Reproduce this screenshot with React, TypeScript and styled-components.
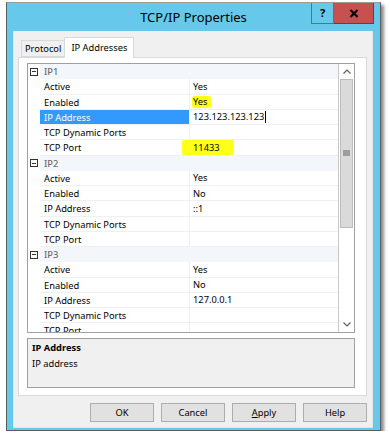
import React from 'react'
import styled, { createGlobalStyle } from 'styled-components'

const GlobalStyle = createGlobalStyle`
  html, body {
    margin: 0;
    padding: 0;
    background: #ffffff;
  }
  body {
    font-family: 'Noto Sans', 'Liberation Sans', sans-serif;
    font-size: 9.3px;
    color: #000000;
  }
`

type Prop = {
  name: string
  value: string
  highlight?: 'yes' | 'port'
  selected?: boolean
}

type Group = {
  name: string
  rows: Prop[]
}

const groups: Group[] = [
  {
    name: 'IP1',
    rows: [
      { name: 'Active', value: 'Yes' },
      { name: 'Enabled', value: 'Yes', highlight: 'yes' },
      { name: 'IP Address', value: '123.123.123.123', selected: true },
      { name: 'TCP Dynamic Ports', value: '' },
      { name: 'TCP Port', value: '11433', highlight: 'port' },
    ],
  },
  {
    name: 'IP2',
    rows: [
      { name: 'Active', value: 'Yes' },
      { name: 'Enabled', value: 'No' },
      { name: 'IP Address', value: '::1' },
      { name: 'TCP Dynamic Ports', value: '' },
      { name: 'TCP Port', value: '' },
    ],
  },
  {
    name: 'IP3',
    rows: [
      { name: 'Active', value: 'Yes' },
      { name: 'Enabled', value: 'No' },
      { name: 'IP Address', value: '127.0.0.1' },
      { name: 'TCP Dynamic Ports', value: '' },
      { name: 'TCP Port', value: '' },
    ],
  },
]

const App = () => {
  return (
    <>
      <GlobalStyle />
      <Window>
        <TitleBar>
          <span />
          <Title>TCP/IP Properties</Title>
          <CaptionButtons>
            <HelpCaption>?</HelpCaption>
            <CloseCaption>
              <svg width="10" height="9" viewBox="0 0 10 9">
                <path d="M1.5 1 L8.5 8 M8.5 1 L1.5 8" stroke="#000" strokeWidth="2.2" />
              </svg>
            </CloseCaption>
          </CaptionButtons>
        </TitleBar>
        <Client>
          <TabStrip>
            <Tab>Protocol</Tab>
            <Tab active>IP Addresses</Tab>
          </TabStrip>
          <TabPanel>
            <PropertyGrid>
              <GridRows>
                {groups.map(group => (
                  <React.Fragment key={group.name}>
                    <Row>
                      <Margin>
                        <Expander />
                      </Margin>
                      <CategoryCell>{group.name}</CategoryCell>
                    </Row>
                    {group.rows.map(row => (
                      <Row key={group.name + row.name}>
                        <Margin />
                        <NameCell selected={row.selected}>{row.name}</NameCell>
                        <ValueCell>
                          {row.highlight ? (
                            <Highlight kind={row.highlight}>{row.value}</Highlight>
                          ) : (
                            row.value
                          )}
                          {row.selected && <Caret />}
                        </ValueCell>
                      </Row>
                    ))}
                  </React.Fragment>
                ))}
              </GridRows>
              <ScrollBar>
                <ArrowButton>
                  <svg width="8" height="5" viewBox="0 0 8 5">
                    <path d="M0.5 4.5 L4 1 L7.5 4.5" fill="none" stroke="#606060" strokeWidth="1.2" />
                  </svg>
                </ArrowButton>
                <Thumb>
                  <svg width="7" height="7" viewBox="0 0 7 7">
                    <path d="M0 1 H7 M0 3 H7 M0 5 H7" stroke="#606060" strokeWidth="1" />
                  </svg>
                </Thumb>
                <Track />
                <ArrowButton>
                  <svg width="8" height="5" viewBox="0 0 8 5">
                    <path d="M0.5 0.5 L4 4 L7.5 0.5" fill="none" stroke="#606060" strokeWidth="1.2" />
                  </svg>
                </ArrowButton>
              </ScrollBar>
            </PropertyGrid>
            <Description>
              <strong>IP Address</strong>
              <span>IP address</span>
            </Description>
          </TabPanel>
          <ButtonRow>
            <DialogButton>OK</DialogButton>
            <DialogButton>Cancel</DialogButton>
            <DialogButton>
              <u>A</u>pply
            </DialogButton>
            <DialogButton>Help</DialogButton>
          </ButtonRow>
        </Client>
      </Window>
    </>
  )
}

const Window = styled.div`
  box-sizing: border-box;
  margin: 2px 0 0 6px;
  width: 375px;
  height: 429px;
  border: 1px solid #5d5d5d;
  border-top-color: #9a9a9a;
  background: #66c8ea;
  box-shadow: 3px 3px 3px rgba(0, 0, 0, 0.45);
  display: flex;
  flex-direction: column;
  padding: 0 7px 2px 6px;
`

const TitleBar = styled.div`
  height: 28px;
  display: grid;
  grid-template-columns: 63px 1fr 63px;
  align-items: start;
  margin-right: -1px;
`

const Title = styled.div`
  font-size: 13px;
  line-height: 28px;
  text-align: center;
  color: #000;
`

const CaptionButtons = styled.div`
  display: flex;
  height: 21px;
`

const HelpCaption = styled.div`
  box-sizing: border-box;
  width: 23px;
  height: 21px;
  border: 1px solid #3f7d93;
  border-top: none;
  background: #66c8ea;
  font-weight: bold;
  font-size: 11px;
  text-align: center;
  line-height: 19px;
`

const CloseCaption = styled.div`
  box-sizing: border-box;
  width: 40px;
  height: 21px;
  border: 1px solid #7a3535;
  border-top: none;
  border-left: none;
  background: #c75050;
  display: flex;
  align-items: center;
  justify-content: center;
`

const Client = styled.div`
  flex: 1;
  background: #f0f0f0;
  border: 1px solid #e4e4e4;
  border-top: none;
  display: flex;
  flex-direction: column;
  padding: 6px 5px 4px 4px;
`

const TabStrip = styled.div`
  display: flex;
  align-items: flex-end;
  height: 21px;
  padding-left: 3px;
  position: relative;
  z-index: 1;
`

const Tab = styled.div<{ active?: boolean }>`
  box-sizing: border-box;
  height: ${p => (p.active ? '21px' : '17px')};
  padding: 0 ${p => (p.active ? '6px' : '3px')};
  margin-bottom: ${p => (p.active ? '0' : '1px')};
  border: 1px solid #d9d9d9;
  border-bottom: ${p => (p.active ? 'none' : '1px solid #d9d9d9')};
  border-right: ${p => (p.active ? '1px solid #d9d9d9' : 'none')};
  background: ${p => (p.active ? '#ffffff' : '#f0f0f0')};
  line-height: ${p => (p.active ? '19px' : '15px')};
`

const TabPanel = styled.div`
  margin-top: -1px;
  height: 339px;
  box-sizing: border-box;
  background: #ffffff;
  border: 1px solid #d9d9d9;
  display: flex;
  flex-direction: column;
  padding: 5px 11px 7px 8px;
`

const PropertyGrid = styled.div`
  height: 270px;
  box-sizing: border-box;
  border: 1px solid #a0a0a0;
  display: flex;
  background: #ffffff;
`

const GridRows = styled.div`
  flex: 1;
  overflow: hidden;
`

const Row = styled.div`
  display: flex;
  height: 15.25px;
`

const Margin = styled.div`
  width: 12px;
  flex-shrink: 0;
  display: flex;
  align-items: center;
  justify-content: center;
  background: #ffffff;
`

const Expander = styled.div`
  box-sizing: border-box;
  width: 8px;
  height: 8px;
  border: 1px solid #333;
  position: relative;
  &::after {
    content: '';
    position: absolute;
    left: 1px;
    right: 1px;
    top: 2.5px;
    height: 1px;
    background: #333;
  }
`

const CategoryCell = styled.div`
  flex: 1;
  background: #f3f6fa;
  color: #6e6e6e;
  padding-left: 4px;
  line-height: 15px;
  font-weight: 500;
`

const NameCell = styled.div<{ selected?: boolean }>`
  box-sizing: border-box;
  width: 150px;
  flex-shrink: 0;
  padding-left: 4px;
  line-height: 15px;
  border-bottom: 1px solid #f0f0f0;
  border-right: 1px solid #f0f0f0;
  background: ${p => (p.selected ? '#3399ff' : '#ffffff')};
  color: ${p => (p.selected ? '#ffffff' : '#000000')};
  white-space: nowrap;
`

const ValueCell = styled.div`
  box-sizing: border-box;
  flex: 1;
  padding-left: 3px;
  line-height: 15px;
  border-bottom: 1px solid #f0f0f0;
  display: flex;
  align-items: center;
  white-space: nowrap;
`

const Highlight = styled.span<{ kind: 'yes' | 'port' }>`
  background: #ffff1a;
  line-height: ${p => (p.kind === 'port' ? '15px' : '12px')};
  padding: ${p => (p.kind === 'port' ? '0 14px 0 11px' : '0 3px 0 1px')};
  margin-left: ${p => (p.kind === 'port' ? '-11px' : '-1px')};
  border-radius: 2px;
`

const Caret = styled.span`
  display: inline-block;
  width: 1px;
  height: 12px;
  background: #000;
  margin-left: 1px;
`

const ScrollBar = styled.div`
  width: 15px;
  flex-shrink: 0;
  display: flex;
  flex-direction: column;
  border-left: 1px solid #c8c8c8;
  background: #ffffff;
`

const ArrowButton = styled.div`
  height: 15px;
  display: flex;
  align-items: center;
  justify-content: center;
  background: #ffffff;
`

const Thumb = styled.div`
  box-sizing: border-box;
  height: 149px;
  margin: 0 1px;
  background: #dadada;
  border: 1px solid #bdbdbd;
  display: flex;
  align-items: center;
  justify-content: center;
`

const Track = styled.div`
  flex: 1;
`

const Description = styled.div`
  margin-top: 5px;
  height: 52px;
  box-sizing: border-box;
  border: 1px solid #a0a0a0;
  background: #f0f0f0;
  padding: 2px 4px;
  display: flex;
  flex-direction: column;
  gap: 2px;
  line-height: 14px;

  strong {
    font-weight: bold;
  }
`

const ButtonRow = styled.div`
  display: flex;
  justify-content: flex-end;
  gap: 7px;
  margin-top: 7px;
`

const DialogButton = styled.div`
  box-sizing: border-box;
  width: 64px;
  height: 19px;
  background: #e1e1e1;
  border: 1px solid #adadad;
  text-align: center;
  line-height: 17px;
`

export default App
